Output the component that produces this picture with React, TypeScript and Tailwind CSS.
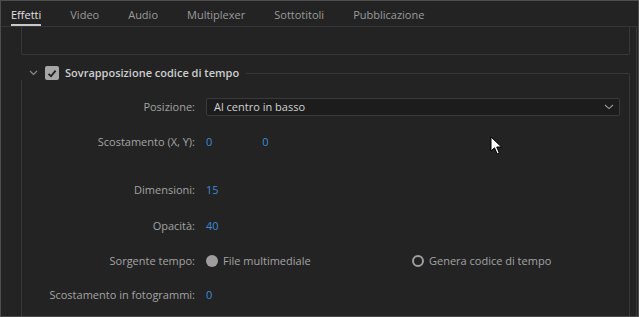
import React from 'react'

const tabs = ['Effetti', 'Video', 'Audio', 'Multiplexer', 'Sottotitoli', 'Pubblicazione']

const Row: React.FC<{ label: string; className?: string; children?: React.ReactNode }> = ({
  label,
  className,
  children,
}) => (
  <div className={`flex h-5 items-center ${className ?? ''}`}>
    <div className="w-[173px] shrink-0 text-right text-[#a3a3a3]">{label}</div>
    <div className="ml-[11px] flex flex-1 items-center">{children}</div>
  </div>
)

const Cursor = () => (
  <svg className="absolute left-[489px] top-[135px]" width="13" height="20" viewBox="0 0 13 20">
    <path d="M1 1 L1 15 L4.5 11.8 L7.2 18 L9.3 17 L6.7 11 L11.5 11 Z" fill="#fff" stroke="#000" strokeWidth="1" />
  </svg>
)

export default function App() {
  return (
    <div
      className="relative flex h-[317px] w-[639px] flex-col overflow-hidden border border-[#4d4d4d] bg-[#232323] text-[11px]"
      style={{ fontFamily: '"Open Sans", "Noto Sans", sans-serif' }}
    >
      <div className="flex h-[26px] shrink-0 items-end gap-[29px] border-b border-[#353535] pl-[10px]">
        {tabs.map((t, i) => (
          <div
            key={t}
            className={`flex flex-col items-start text-[11px] leading-none ${
              i === 0 ? 'text-[#e2e2e2]' : 'text-[#9b9b9b]'
            }`}
          >
            <span className="pb-[4px]">{t}</span>
            <span className={`h-[2px] w-full ${i === 0 ? 'bg-[#c9c9c9]' : 'bg-transparent'}`} />
          </div>
        ))}
      </div>

      <div className="flex flex-1">
        <div className="flex flex-1 flex-col pl-[20px] pr-[6px]">
          {/* tail of the previous group */}
          <div className="h-[28px] rounded-b-[2px] border-x border-b border-[#383838]" />

          {/* timecode overlay group */}
          <div className="mt-[11px] flex h-[14px] items-start">
            <svg className="ml-[8px] mt-[4px]" width="9" height="6" viewBox="0 0 9 6">
              <path d="M1 1 L4.5 4.5 L8 1" fill="none" stroke="#8a8a8a" strokeWidth="1.2" />
            </svg>
            <div className="ml-[7px] flex h-[14px] w-[14px] items-center justify-center rounded-[2px] bg-[#a6a6a6]">
              <svg width="10" height="9" viewBox="0 0 10 9">
                <path d="M1.5 4.8 L4 7.2 L8.6 1.6" fill="none" stroke="#1e1e1e" strokeWidth="1.8" />
              </svg>
            </div>
            <span className="ml-[6px] text-[11px] font-semibold leading-[14px] text-[#cfcfcf]">
              Sovrapposizione codice di tempo
            </span>
            <div className="ml-[7px] mt-[7px] flex-1 self-stretch rounded-tr-[2px] border-r border-t border-[#383838]" />
          </div>
          <div className="flex flex-1 flex-col border-x border-[#383838]">
            <Row label="Posizione:" className="mt-[17px]">
              <div className="flex h-[18px] w-[414px] items-center justify-between rounded-[2px] border border-[#3a3a3a] bg-[#1c1c1c] pl-[7px] pr-[5px] text-[#d2d2d2]">
                <span>Al centro in basso</span>
                <svg width="10" height="6" viewBox="0 0 10 6">
                  <path d="M1 1 L5 4.6 L9 1" fill="none" stroke="#9a9a9a" strokeWidth="1.1" />
                </svg>
              </div>
            </Row>
            <Row label="Scostamento (X, Y):" className="mt-[15px]">
              <span className="text-[#3d8bd8]">0</span>
              <span className="ml-[50px] text-[#3d8bd8]">0</span>
            </Row>
            <Row label="Dimensioni:" className="mt-[28px]">
              <span className="text-[#3d8bd8]">15</span>
            </Row>
            <Row label="Opacità:" className="mt-[16px]">
              <span className="text-[#3d8bd8]">40</span>
            </Row>
            <Row label="Sorgente tempo:" className="mt-[15px]">
              <span className="h-[12px] w-[12px] rounded-full bg-[#9e9e9e]" />
              <span className="ml-[5px] w-[189px] text-[#a3a3a3]">File multimediale</span>
              <span className="h-[12px] w-[12px] rounded-full border-2 border-[#9e9e9e]" />
              <span className="ml-[5px] text-[#a3a3a3]">Genera codice di tempo</span>
            </Row>
            <Row label="Scostamento in fotogrammi:" className="mt-[14px]">
              <span className="text-[#3d8bd8]">0</span>
            </Row>
          </div>
        </div>
        <div className="w-px bg-[#383838]" />
        <div className="w-px" />
      </div>

      <Cursor />
    </div>
  )
}
